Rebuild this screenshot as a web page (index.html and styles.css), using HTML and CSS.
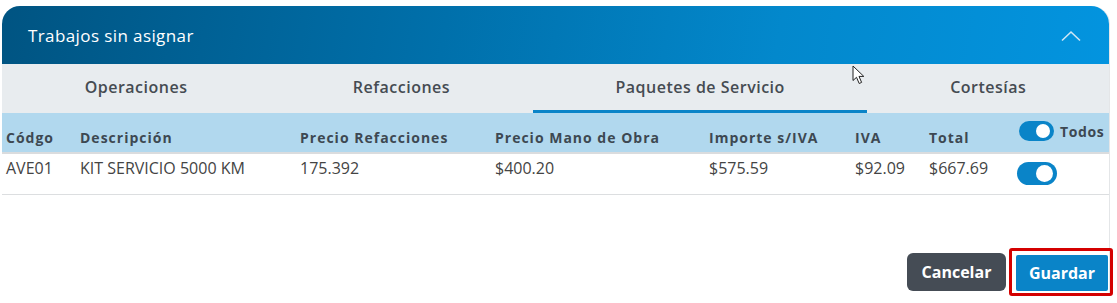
FILE: index.html
```html
<!DOCTYPE html>
<html lang="es">
<head>
  <meta charset="UTF-8">
  <title>Trabajos sin asignar</title>
  <link rel="stylesheet" href="styles.css">
</head>
<body>
  <div class="card">
    <header class="card-header">
      <span class="titulo">Trabajos sin asignar</span>
      <svg class="chevron" width="20" height="12" viewBox="0 0 20 12">
        <polyline points="1,10.5 10,2 19,10.5" fill="none" stroke="#cfe6f5" stroke-width="1.6"/>
      </svg>
    </header>

    <nav class="tabs">
      <div class="tab">Operaciones</div>
      <div class="tab">Refacciones</div>
      <div class="tab activo">Paquetes de Servicio</div>
      <div class="tab">Cortesías</div>
    </nav>

    <table class="tabla">
      <colgroup>
        <col style="width: 74px">
        <col style="width: 220px">
        <col style="width: 195px">
        <col style="width: 214px">
        <col style="width: 146px">
        <col style="width: 74px">
        <col style="width: 88px">
        <col>
      </colgroup>
      <thead>
        <tr>
          <th>Códgo</th>
          <th>Descripción</th>
          <th>Precio Refacciones</th>
          <th>Precio Mano de Obra</th>
          <th>Importe s/IVA</th>
          <th>IVA</th>
          <th>Total</th>
          <th class="col-todos"><span class="switch chico"></span><span class="todos">Todos</span></th>
        </tr>
      </thead>
      <tbody>
        <tr>
          <td>AVE01</td>
          <td>KIT SERVICIO 5000 KM</td>
          <td>175.392</td>
          <td>$400.20</td>
          <td>$575.59</td>
          <td>$92.09</td>
          <td>$667.69</td>
          <td><span class="switch"></span></td>
        </tr>
      </tbody>
    </table>

    <div class="acciones">
      <button class="btn btn-cancelar">Cancelar</button>
      <div class="resaltado">
        <button class="btn btn-guardar">Guardar</button>
      </div>
    </div>
  </div>

  <svg class="cursor" width="14" height="20" viewBox="0 0 14 20">
    <path d="M1 1 L1 15.5 L4.5 12.3 L7.2 18.5 L9.6 17.4 L7 11.4 L11.8 11.4 Z" fill="#fff" stroke="#222" stroke-width="1"/>
  </svg>
</body>
</html>
```

FILE: styles.css
```css
* {
  box-sizing: border-box;
}
body {
  margin: 0;
  font-family: 'Open Sans', sans-serif;
  background-color: #fff;
  color: #444;
  position: relative;
}
.card {
  margin: 6px 0 0 2px;
  width: 1108px;
  background: #fff;
  border-right: 1px solid #e4e6e8;
  border-radius: 18px 18px 0 0;
}
.card-header {
  height: 58px;
  display: flex;
  align-items: center;
  justify-content: space-between;
  padding: 0 28px 0 26px;
  background: linear-gradient(100deg, #005482 0%, #0070ab 40%, #0388cc 70%, #0394df 100%);
  border-radius: 18px 18px 0 0;
  color: #fff;
}
.titulo {
  font-size: 17px;
  letter-spacing: 0.4px;
}
.chevron {
  margin-top: 1px;
}
.tabs {
  display: flex;
  height: 49px;
  background-color: #e8ecef;
}
.tab {
  flex: 1 1 auto;
  text-align: center;
  font-size: 16px;
  font-weight: 600;
  color: #454b52;
  padding-top: 12px;
  letter-spacing: 0.5px;
}
.tab.activo {
  border-bottom: 3px solid #0a84c8;
}
.tabla {
  width: 100%;
  border-collapse: collapse;
  table-layout: fixed;
}
.tabla th {
  background-color: #b1d8ee;
  height: 40px;
  text-align: left;
  font-size: 14px;
  font-weight: 700;
  color: #3d4852;
  letter-spacing: 1px;
  padding: 10px 0 0 4px;
  border-bottom: 2px solid #dadcde;
}
.tabla td {
  height: 41px;
  font-size: 16px;
  line-height: 22px;
  color: #444;
  padding: 3px 0 0 4px;
  vertical-align: top;
  border-bottom: 1px solid #dcdee0;
}
.tabla th.col-todos {
  padding-top: 0;
  padding-left: 6px;
  vertical-align: middle;
  white-space: nowrap;
}
.todos {
  vertical-align: middle;
  margin-left: 6px;
  position: relative;
  top: -2px;
  letter-spacing: 0.6px;
}
.switch {
  display: inline-block;
  vertical-align: top;
  width: 40px;
  height: 23px;
  border-radius: 12px;
  background-color: #0a84c8;
  position: relative;
  margin-top: 5px;
}
.switch::after {
  content: '';
  position: absolute;
  right: 4px;
  top: 3px;
  width: 17px;
  height: 17px;
  border-radius: 50%;
  background: #fff;
}
.switch.chico {
  width: 35px;
  height: 20px;
  margin-top: 0;
  vertical-align: middle;
  top: -2px;
}
.switch.chico::after {
  width: 14px;
  height: 14px;
  right: 4px;
}
.acciones {
  display: flex;
  justify-content: flex-end;
  align-items: center;
  gap: 3px;
  padding-top: 53px;
  margin-right: -4px;
}
.btn {
  border: none;
  border-radius: 6px;
  color: #fff;
  font-family: 'Open Sans', sans-serif;
  font-size: 16px;
  font-weight: 700;
  height: 38px;
  cursor: pointer;
}
.btn-cancelar {
  width: 99px;
  background-color: #454c55;
}
.resaltado {
  border: 3px solid #d40000;
  border-radius: 3px;
  padding: 4px 2px 2px 4px;
}
.btn-guardar {
  width: 92px;
  height: 36px;
  border-radius: 2px;
  background-color: #0a84c8;
  display: block;
}
.cursor {
  position: absolute;
  left: 852px;
  top: 65px;
}
```
